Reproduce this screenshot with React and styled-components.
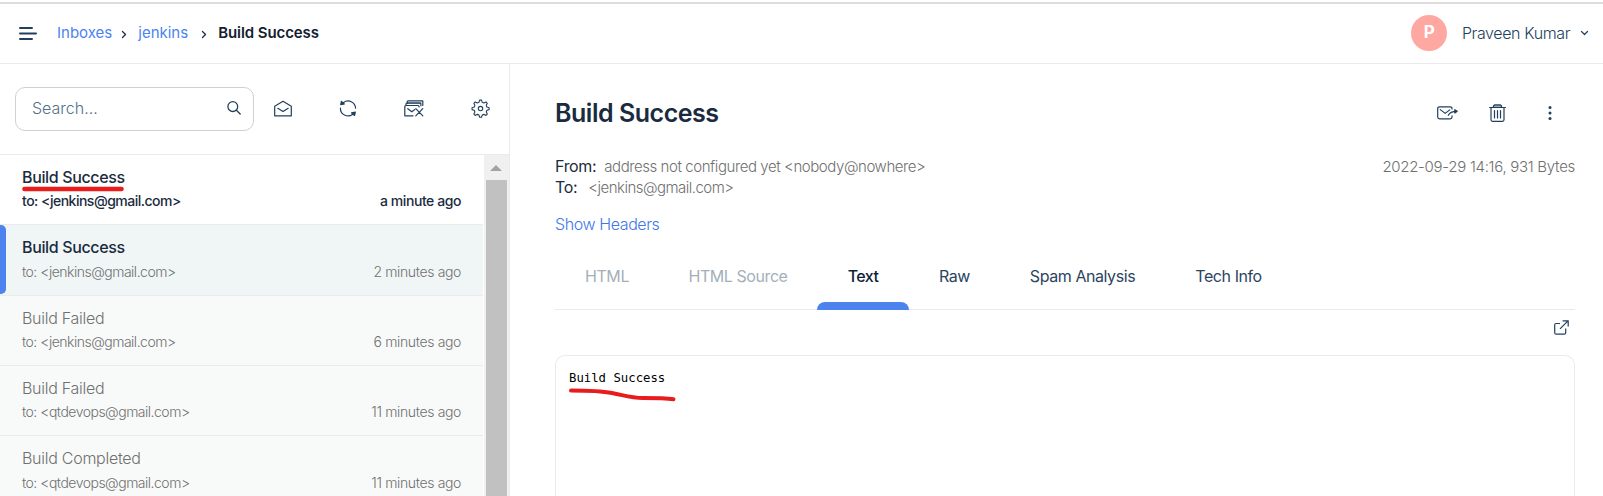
import React from 'react';
import styled, { createGlobalStyle } from 'styled-components';

const navy = '#233f5e';
const ink = '#1a2b40';
const blue = '#4c83ee';
const line = '#ebebeb';
const grey = '#707070';
const red = '#e81c1c';

const GlobalStyle = createGlobalStyle`
  * { box-sizing: border-box; }
  html, body { margin: 0; height: 100%; overflow: hidden; background: #fff; }
  body { font-family: Inter, "Liberation Sans", sans-serif; font-size: 16px; color: ${ink}; }
  svg { display: block; flex: none; overflow: visible; }
`;

const Page = styled.div`
  height: 496px;
  display: flex;
  flex-direction: column;
  overflow: hidden;
  padding-top: 2px;
`;

const Header = styled.header`
  flex: none;
  height: 62px;
  display: flex;
  align-items: center;
  justify-content: space-between;
  border-top: 2px solid #dcdcdc;
  border-bottom: 1px solid ${line};
  padding: 0 15px 1px 19px;
`;

const Breadcrumbs = styled.nav`
  display: flex;
  align-items: center;
  font-size: 15px;
  line-height: 20px;
`;

const MenuIcon = styled.svg`
  margin: 1px 20px 0 0;
`;

const Crumb = styled.a`
  color: ${blue};
`;

const CurrentCrumb = styled.span`
  font-weight: 600;
  color: #14202f;
  letter-spacing: -0.08px;
`;

const CrumbArrow = styled.svg`
  margin: 3px ${p => p.$after}px 0 ${p => p.$before}px;
`;

const Account = styled.div`
  display: flex;
  align-items: center;
  color: ${navy};
  font-weight: 300;
  letter-spacing: -0.39px;
`;

const Avatar = styled.span`
  width: 36px;
  height: 36px;
  border-radius: 50%;
  background: #ffa8a2;
  color: #fff;
  font-weight: 700;
  font-size: 17px;
  line-height: 35px;
  text-align: center;
  margin-right: 15px;
`;

const AccountName = styled.span`
  line-height: 20px;
  padding-bottom: 1px;
  margin-right: 11px;
`;

const Body = styled.div`
  flex: 1;
  min-height: 0;
  display: flex;
`;

const Sidebar = styled.aside`
  flex: none;
  width: 510px;
  display: flex;
  flex-direction: column;
  border-right: 1px solid ${line};
`;

const Toolbar = styled.div`
  flex: none;
  height: 91px;
  display: flex;
  align-items: center;
  border-bottom: 1px solid ${line};
  padding: 0 19px 1px 15px;
`;

const SearchBox = styled.div`
  width: 239px;
  height: 44px;
  border: 1px solid #cfd0d4;
  border-radius: 10px;
  display: flex;
  align-items: center;
  justify-content: space-between;
  padding: 0 12px 2px 16px;
  color: #527089;
  font-weight: 300;
  line-height: 22px;
`;

const Tools = styled.div`
  flex: 1;
  display: flex;
  align-items: center;
  justify-content: space-between;
  padding: 0 0 1px 20px;
`;

const ListArea = styled.div`
  flex: 1;
  min-height: 0;
  display: flex;
`;

const List = styled.div`
  width: 483px;
  overflow: hidden;
`;

const Row = styled.article`
  height: ${p => (p.$selected ? 71 : 70)}px;
  padding: 10px 22px 0;
  background: ${p => (p.$unread ? '#fff' : p.$selected ? '#f0f6f6' : '#f8faf9')};
  border-bottom: 1px solid ${line};
  color: ${p => (p.$unread ? ink : grey)};
  ${p => p.$selected && 'display: flex; padding-left: 0; padding-top: 0;'}
`;

const SelectedBar = styled.span`
  width: 6px;
  height: 69px;
  background: ${blue};
  border-radius: 0 5px 5px 0;
  margin-right: 16px;
`;

const RowContent = styled.div`
  flex: 1;
  padding-top: ${p => (p.$selected ? 10 : 0)}px;
`;

const RowTitle = styled.div`
  line-height: 24px;
  font-weight: ${p => (p.$strong ? 500 : 300)};
  letter-spacing: ${p => (p.$strong ? -0.36 : -0.27)}px;
  color: ${p => (p.$strong ? ink : 'inherit')};
`;

const RowMeta = styled.div`
  display: flex;
  justify-content: space-between;
  font-size: 14px;
  line-height: 24px;
  font-weight: ${p => (p.$strong ? 500 : 300)};
  letter-spacing: -0.5px;
  padding-top: ${p => p.$drop}px;
`;

const Age = styled.span`
  letter-spacing: ${p => (p.$strong ? -0.43 : -0.36)}px;
`;

const Scrollbar = styled.div`
  width: 25px;
  margin-left: 1px;
  background: #f0f0f0;
  display: flex;
  flex-direction: column;
  align-items: center;
  padding: 10px 1px 0 0;
`;

const Thumb = styled.div`
  width: 21px;
  flex: 1;
  background: #c1c1c1;
  margin-top: 9px;
`;

const Message = styled.main`
  flex: 1;
  display: flex;
  flex-direction: column;
  padding: 31px 28px 0 45px;
`;

const TitleBar = styled.div`
  display: flex;
  align-items: center;
  justify-content: space-between;
  height: 36px;
`;

const Title = styled.h1`
  margin: 0;
  font-size: 25px;
  font-weight: 600;
  letter-spacing: -0.47px;
  line-height: 36px;
  color: ${ink};
`;

const Actions = styled.div`
  display: flex;
  align-items: center;
  padding-right: 23px;
`;

const TrashIcon = styled.svg`
  margin: 0 42px 0 31px;
`;

const Envelope = styled.div`
  display: flex;
  justify-content: space-between;
  padding-top: 25px;
`;

const Field = styled.div`
  display: flex;
  line-height: 21px;
  height: 21px;
  font-size: 15px;
  font-weight: 300;
  letter-spacing: ${p => p.$tracking}px;
  color: ${grey};
`;

const FieldName = styled.span`
  font-size: 16px;
  font-weight: 400;
  letter-spacing: -0.35px;
  color: ${ink};
  margin-right: ${p => p.$gap}px;
`;

const HeadersLink = styled.a`
  align-self: flex-start;
  margin-top: 15px;
  line-height: 22px;
  font-weight: 300;
  letter-spacing: -0.4px;
  color: #3f76ea;
`;

const Tabs = styled.div`
  display: flex;
  height: 66px;
  margin-top: 9px;
  border-bottom: 1px solid ${line};
`;

const Tab = styled.div`
  width: ${p => p.$width}px;
  height: 66px;
  padding-top: 20px;
  display: flex;
  flex-direction: column;
  justify-content: space-between;
  align-items: center;
  line-height: 24px;
  white-space: nowrap;
  font-weight: ${p => (p.$active ? 500 : 400)};
  letter-spacing: ${p => (p.$active ? -0.6 : -0.43)}px;
  color: ${p => (p.$disabled ? '#a4afb9' : p.$active ? '#0e1f38' : '#2b4461')};
`;

const TabMarker = styled.span`
  align-self: stretch;
  height: 8px;
  background: ${blue};
  border-radius: 8px 8px 0 0;
`;

const ContentTools = styled.div`
  display: flex;
  justify-content: flex-end;
  height: 45px;
  padding: 10px 6px 0 0;
`;

const TextPanel = styled.div`
  flex: 1;
  border: 1px solid ${line};
  border-bottom: 0;
  border-radius: 10px 10px 0 0;
  padding: 13px;
`;

const PlainText = styled.pre`
  position: relative;
  margin: 0;
  font-family: "DejaVu Sans Mono", monospace;
  font-size: 12.3px;
  line-height: 18px;
  color: #000;
`;

const MarkedSubject = styled.span`
  position: relative;
`;

const Underline = styled.svg`
  position: absolute;
  left: 0;
  top: ${p => p.$top}px;
`;

const Stroke = ({ children, ...rest }) => (
  <g fill="none" stroke={navy} strokeWidth="1.2" strokeLinecap="round" strokeLinejoin="round" {...rest}>
    {children}
  </g>
);

const messages = [
  { title: 'Build Success', to: '<jenkins@gmail.com>', age: 'a minute ago', unread: true },
  { title: 'Build Success', to: '<jenkins@gmail.com>', age: '2 minutes ago', selected: true, drop: 1 },
  { title: 'Build Failed', to: '<jenkins@gmail.com>', age: '6 minutes ago' },
  { title: 'Build Failed', to: '<qtdevops@gmail.com>', age: '11 minutes ago' },
  { title: 'Build Completed', to: '<qtdevops@gmail.com>', age: '11 minutes ago', drop: 1 },
];

const tabs = [
  { label: 'HTML', width: 104, disabled: true },
  { label: 'HTML Source', width: 158, disabled: true },
  { label: 'Text', width: 92, active: true },
  { label: 'Raw', width: 91 },
  { label: 'Spam Analysis', width: 165 },
  { label: 'Tech Info', width: 127 },
];

function MessageRow({ title, to, age, unread, selected, drop = 0 }) {
  return (
    <Row $unread={unread} $selected={selected}>
      {selected && <SelectedBar />}
      <RowContent $selected={selected}>
        <RowTitle $strong={unread || selected}>
          {unread ? (
            <MarkedSubject>
              {title}
              <Underline $top={19} width="104" height="6">
                <path d="M2.5 3H99.500" fill="none" stroke={red} strokeWidth="4.6" strokeLinecap="round" />
              </Underline>
            </MarkedSubject>
          ) : (
            title
          )}
        </RowTitle>
        <RowMeta $strong={unread} $drop={drop}>
          <span>to: {to}</span>
          <Age $strong={unread}>{age}</Age>
        </RowMeta>
      </RowContent>
    </Row>
  );
}

export default function App() {
  return (
    <>
      <GlobalStyle />
      <Page>
        <Header>
          <Breadcrumbs>
            <MenuIcon width="18" height="13">
              <Stroke strokeWidth="2">
                <path d="M1 1h12M1 6.500h16M1 12h12" />
              </Stroke>
            </MenuIcon>
            <Crumb>Inboxes</Crumb>
            <CrumbArrow $before={10} $after={12} width="4" height="7">
              <Stroke stroke={ink} strokeWidth="1.3"><path d="M.5 .5l3 3-3 3" /></Stroke>
            </CrumbArrow>
            <Crumb>jenkins</Crumb>
            <CrumbArrow $before={14} $after={12} width="4" height="7">
              <Stroke stroke={ink} strokeWidth="1.3"><path d="M.5 .5l3 3-3 3" /></Stroke>
            </CrumbArrow>
            <CurrentCrumb>Build Success</CurrentCrumb>
          </Breadcrumbs>
          <Account>
            <Avatar>P</Avatar>
            <AccountName>Praveen Kumar</AccountName>
            <svg width="7" height="4">
              <Stroke><path d="M.5 .5l3 3 3-3" /></Stroke>
            </svg>
          </Account>
        </Header>
        <Body>
          <Sidebar>
            <Toolbar>
              <SearchBox>
                <span>Search...</span>
                <svg width="14" height="14">
                  <Stroke strokeWidth="1.3"><circle cx="5.8" cy="5.6" r="4.9" /><path d="M9.4 9.2l3.8 3.8" /></Stroke>
                </svg>
              </SearchBox>
              <Tools>
                <svg width="18" height="17">
                  <Stroke>
                    <path d="M.7 6.2L9 1.2l8.3 5v9.6H.7z" />
                    <path d="M3.800 8.3l5.2 3.2 5.2-3.2" />
                  </Stroke>
                </svg>
                <svg width="18" height="17">
                  <Stroke>
                    <path d="M4.500 2.500A7.6 7.6 0 0 1 16.6 8.200M13.500 14.400A7.6 7.6 0 0 1 1.4 8.200" />
                    <path d="M1.7 4.7L2.4 1.4 5.300 4zM16.3 12.2l-.8 3.3-3-2.6z" fill={navy} />
                  </Stroke>
                </svg>
                <svg width="20" height="17">
                  <path d="M3.2 2h14.2v1.6H3.2z" fill="#9aa8b8" />
                  <Stroke>
                    <path d="M3.2 3.6V1.9q0-1 1-1h14.600v4.500M2 5.6V4q0-.9 1-.9h13q.9 0 .9.9v1.800" />
                    <path d="M9 15.8H.8V6.4q0-.9.9-.9h12.400q.9 0 .9.9v.6" />
                    <path d="M3.8 8.7l4 3.1 3-2.200M11.8 8.600l7 7.200M18.8 8.600l-7 7.200" />
                  </Stroke>
                </svg>
                <svg width="19" height="19" viewBox="0 0 24 24">
                  <Stroke strokeWidth="1.4">
                    <path d="M12 1.2l1.3.2.9 2.8 2.1.8 2.6-1.3 1.7 1.7-1.3 2.6.8 2.1 2.8.9v2.4l-2.8.9-.8 2.1 1.3 2.6-1.7 1.7-2.6-1.3-2.1.8-.9 2.8h-2.4l-.9-2.8-2.1-.8-2.6 1.3L3.6 19l1.3-2.6-.8-2.1-2.8-.9V11l2.8-.9.8-2.1-1.3-2.6 1.7-1.7L7.900 5l2.100-.8.900-2.800z" />
                    <circle cx="12" cy="12.100" r="2.800" />
                  </Stroke>
                </svg>
              </Tools>
            </Toolbar>
            <ListArea>
              <List>
                {messages.map((m, i) => <MessageRow key={i} {...m} />)}
              </List>
              <Scrollbar>
                <svg width="12" height="6"><path d="M6 0l6 6H0z" fill="#a3a3a3" /></svg>
                <Thumb />
              </Scrollbar>
            </ListArea>
          </Sidebar>
          <Message>
            <TitleBar>
              <Title>Build Success</Title>
              <Actions>
                <svg width="21" height="14">
                  <Stroke>
                    <path d="M15 3V2.600q0-1.800-1.800-1.800H2.500Q.7.8.7 2.600v8.400q0 1.800 1.800 1.800h10.700q1.800 0 1.800-1.800V9.800" />
                    <path d="M3.300 3.600l4.900 3.800 4.500-3.500M11.300 9.300q2-4 8-4" />
                    <path d="M17.800 3.700l2.400 1.500-2.400 1.700z" fill={navy} />
                  </Stroke>
                </svg>
                <TrashIcon width="17" height="18">
                  <path d="M4.500 1h8v2h-8z" fill="#9aa8b8" />
                  <Stroke>
                    <path d="M.6 3.500h15.800M4.300 3.200Q4.500.8 6 .8h5q1.500 0 1.700 2.400M2 3.600v12.200q0 1.500 1.500 1.500h10q1.500 0 1.500-1.500V3.600" />
                    <path d="M5.500 6.500v7.500M8.500 6.500v7.500M11.500 6.500v7.500" />
                  </Stroke>
                </TrashIcon>
                <svg width="4" height="14">
                  <g fill={navy}><circle cx="2" cy="1.600" r="1.500" /><circle cx="2" cy="7" r="1.500" /><circle cx="2" cy="12.400" r="1.500" /></g>
                </svg>
              </Actions>
            </TitleBar>
            <Envelope>
              <div>
                <Field $tracking={-0.43}><FieldName $gap={8}>From:</FieldName>address not configured yet &lt;nobody@nowhere&gt;</Field>
                <Field $tracking={-0.52}><FieldName $gap={11}>To:</FieldName>&lt;jenkins@gmail.com&gt;</Field>
              </div>
              <Field $tracking={-0.29}>2022-09-29 14:16, 931 Bytes</Field>
            </Envelope>
            <HeadersLink>Show Headers</HeadersLink>
            <Tabs>
              {tabs.map(t => (
                <Tab key={t.label} $width={t.width} $active={t.active} $disabled={t.disabled}>
                  {t.label}
                  {t.active && <TabMarker />}
                </Tab>
              ))}
            </Tabs>
            <ContentTools>
              <svg width="15" height="15">
                <Stroke strokeLinecap="butt" strokeLinejoin="miter">
                  <path d="M6 3.500H2.200q-1.500 0-1.500 1.500v7.700q0 1.500 1.500 1.500h8q1.500 0 1.500-1.500V8.500" />
                  <path d="M6 8.800L14 .8M8.600.8h5.600v5.600" />
                </Stroke>
              </svg>
            </ContentTools>
            <TextPanel>
              <PlainText>
                Build Success
                <Underline $top={19} width="108" height="16">
                  <path d="M2 2.500 C16 2.500 30 2.500 43 5 S62 10 74 10 S96 10 104.500 11.300" fill="none" stroke={red} strokeWidth="4" strokeLinecap="round" />
                </Underline>
              </PlainText>
            </TextPanel>
          </Message>
        </Body>
      </Page>
    </>
  );
}
